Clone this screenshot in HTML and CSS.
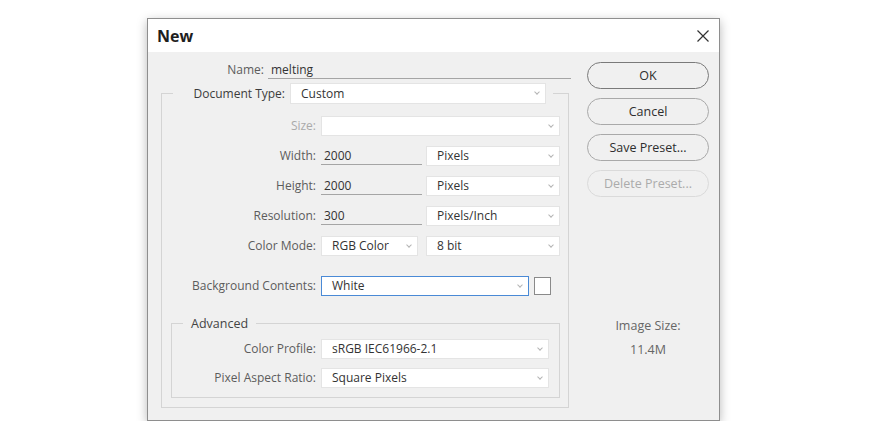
FILE: index.html
```html
<!DOCTYPE html>
<html>
<head>
<meta charset="utf-8">
<title>New</title>
<link rel="stylesheet" href="styles.css">
</head>
<body>
<div class="page">
  <div class="dialog">
    <div class="titlebar">
      <span class="title">New</span>
      <svg class="close" width="12" height="12" viewBox="0 0 12 12"><path d="M0.5 0.5 L11.5 11.5 M11.5 0.5 L0.5 11.5" stroke="#333" stroke-width="1.2" fill="none"/></svg>
    </div>
    <div class="body">
      <div class="main">
        <div class="name-row">
          <span class="lbl name-lbl">Name:</span>
          <div class="text-input name-input">melting</div>
        </div>
        <fieldset class="group">
          <legend class="doc-legend">
            <span class="lbl doc-lbl">Document Type:</span>
            <div class="select doc-select">Custom</div>
          </legend>
          <div class="row">
            <span class="lbl dim">Size:</span>
            <div class="select size-select"></div>
          </div>
          <div class="row">
            <span class="lbl">Width:</span>
            <div class="text-input num-input">2000</div>
            <div class="select unit-select">Pixels</div>
          </div>
          <div class="row">
            <span class="lbl">Height:</span>
            <div class="text-input num-input">2000</div>
            <div class="select unit-select">Pixels</div>
          </div>
          <div class="row">
            <span class="lbl">Resolution:</span>
            <div class="text-input num-input">300</div>
            <div class="select unit-select">Pixels/Inch</div>
          </div>
          <div class="row">
            <span class="lbl">Color Mode:</span>
            <div class="select mode-select">RGB Color</div>
            <div class="select bit-select">8 bit</div>
          </div>
          <div class="row bg-row">
            <span class="lbl">Background Contents:</span>
            <div class="select bg-select">White</div>
            <div class="swatch"></div>
          </div>
          <fieldset class="adv">
            <legend class="adv-legend">Advanced</legend>
            <div class="row adv-row">
              <span class="lbl adv-lbl">Color Profile:</span>
              <div class="select adv-select">sRGB IEC61966-2.1</div>
            </div>
            <div class="row adv-row last">
              <span class="lbl adv-lbl">Pixel Aspect Ratio:</span>
              <div class="select adv-select">Square Pixels</div>
            </div>
          </fieldset>
        </fieldset>
      </div>
      <div class="side">
        <div class="btn btn-ok">OK</div>
        <div class="btn">Cancel</div>
        <div class="btn">Save Preset...</div>
        <div class="btn btn-disabled">Delete Preset...</div>
        <div class="img-size">
          <div class="img-size-lbl">Image Size:</div>
          <div class="img-size-val">11.4M</div>
        </div>
      </div>
    </div>
  </div>
</div>
</body>
</html>
```
FILE: styles.css
```css
* { box-sizing: border-box; }
html, body { margin: 0; padding: 0; background: #ffffff; }
body {
  font-family: "Open Sans", "DejaVu Sans", sans-serif;
  font-size: 12px;
  color: #333;
}
.page { padding: 18px 0 0 147px; }
.dialog {
  width: 573px;
  height: 403px;
  border: 1px solid #8e8e8e;
  background: #f0f0f0;
  box-shadow: 0 3px 10px rgba(0, 0, 0, 0.28);
  display: flex;
  flex-direction: column;
}
.titlebar {
  height: 33px;
  flex: none;
  background: #ffffff;
  display: flex;
  align-items: center;
  justify-content: space-between;
  padding: 0 10px 0 9px;
}
.title {
  font-weight: bold;
  font-size: 16px;
  color: #1e1e1e;
  line-height: 20px;
  padding-top: 1px;
}
.close { display: block; margin-top: 1px; }
.body {
  flex: 1;
  display: flex;
  padding: 0 10px 0 12px;
  gap: 16px;
}
.main { width: 411px; padding-top: 9px; }
.lbl {
  color: #5c5c5c;
  text-align: right;
  white-space: nowrap;
  line-height: 18px;
}
.dim { color: #aaaaaa; }
.name-row { display: flex; height: 18px; align-items: stretch; }
.name-lbl { width: 104px; }
.text-input {
  border-bottom: 1px solid #a5a5a5;
  color: #333;
  line-height: 17px;
  padding-left: 3px;
  white-space: nowrap;
}
.name-input { flex: 1; margin-left: 4px; }
.group {
  margin: 4px 2px 0 1px;
  padding: 12px 8px 9px 0;
  border: 1px solid #d4d4d4;
  min-width: 0;
}
.doc-legend {
  display: flex;
  align-items: center;
  margin-left: 11px;
  padding: 0 7px 0 12px;
  height: 21px;
}
.doc-lbl { width: 100px; color: #3c3c3c; line-height: 20px; padding-top: 1px; }
.select {
  position: relative;
  height: 20px;
  background: #ffffff;
  border: 1px solid #e4e4e4;
  line-height: 18px;
  padding-left: 10px;
  color: #333;
  white-space: nowrap;
}
.select::after {
  content: "";
  position: absolute;
  right: 6px;
  top: 6px;
  width: 3px;
  height: 3px;
  border-right: 1px solid #b4b4b4;
  border-bottom: 1px solid #b4b4b4;
  transform: rotate(45deg);
}
.doc-select { width: 256px; height: 21px; margin-left: 5px; line-height: 20px; }
.row { display: flex; align-items: center; height: 20px; margin-bottom: 10px; }
.row > .lbl { width: 154px; margin-right: 5px; }
.size-select { width: 239px; }
.num-input { width: 101px; height: 18px; margin-top: -1px; }
.unit-select { width: 134px; margin-left: 4px; }
.mode-select { width: 97px; }
.bit-select { width: 134px; margin-left: 8px; }
.bg-row { margin-top: 20px; margin-bottom: 0; }
.bg-select { width: 208px; border-color: #4a8ad6; }
.swatch {
  width: 17px;
  height: 18px;
  margin-left: 5px;
  background: #ffffff;
  border: 1px solid #8a8a8a;
}
.adv {
  margin: 19px 0 0 9px;
  padding: 7px 10px 0 0;
  border: 1px solid #d4d4d4;
  min-width: 0;
}
.adv-legend {
  margin-left: 11px;
  padding: 0 8px;
  color: #444;
  font-size: 12.5px;
  line-height: 17px;
}
.adv-row { margin-bottom: 9px; }
.row > .adv-lbl { width: 144px; }
.adv-select { flex: 1; }
.side { width: 122px; padding-top: 10px; }
.btn {
  height: 27px;
  margin-bottom: 9px;
  border: 1px solid #a9a9a9;
  border-radius: 14px;
  background: #f0f0f0;
  text-align: center;
  line-height: 25px;
  font-size: 12.5px;
  color: #2e2e2e;
}
.btn-ok { border-color: #7a7a7a; }
.btn-disabled { border-color: #dadada; color: #ababab; }
.img-size {
  margin-top: 121px;
  text-align: center;
  color: #666;
  font-size: 12.5px;
  line-height: 16px;
}
.img-size-val { margin-top: 8px; }
```
